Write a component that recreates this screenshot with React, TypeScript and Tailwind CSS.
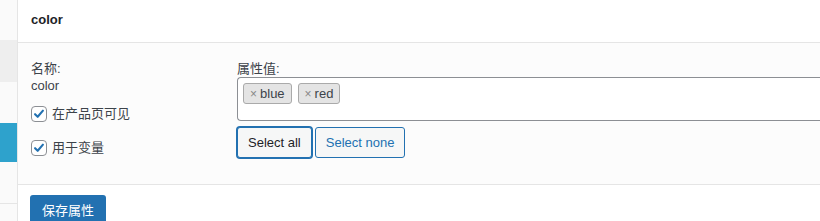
import React from 'react';

const font = { fontFamily: '"Liberation Sans", "Noto Sans CJK SC", sans-serif' };

function Check({ label }: { label: string }) {
  return (
    <label className="flex h-[19px] items-center gap-[5px] text-[13px] text-[#3c434a]">
      <span className="flex h-4 w-4 items-center justify-center rounded-[4px] border border-[#8c8f94] bg-white">
        <svg viewBox="0 0 16 16" className="h-[14px] w-[14px]">
          <path d="M3.5 8.2 L6.5 11.2 L12.5 4.2" fill="none" stroke="#2271b1" strokeWidth="2.4" strokeLinecap="round" strokeLinejoin="round" />
        </svg>
      </span>
      {label}
    </label>
  );
}

function Tag({ text }: { text: string }) {
  return (
    <span className="flex h-[21px] items-center rounded-[3px] border border-[#aaaaaa] bg-[#e4e4e4] px-[6px] text-[13px] text-[#3c434a]">
      <span className="mr-[3px] text-[12px] text-[#888]">×</span>
      {text}
    </span>
  );
}

export default function App() {
  return (
    <div className="flex h-[221px] w-[820px] overflow-hidden bg-white" style={font}>
      <div className="flex w-[18px] shrink-0 flex-col border-r border-[#e5e5e5]">
        <div className="h-[40px] shrink-0 bg-[#fafafa]" />
        <div className="h-[42px] shrink-0 bg-[#eeeeee]" />
        <div className="h-[41px] shrink-0 bg-[#fafafa]" />
        <div className="h-[39px] shrink-0 bg-[#2ea2cc]" />
        <div className="h-[42px] shrink-0 border-b border-[#e5e5e5] bg-[#fafafa]" />
        <div className="flex-1 bg-[#fafafa]" />
      </div>
      <div className="flex flex-1 flex-col">
        <div className="flex h-[43px] shrink-0 items-center border-b border-[#e5e5e5] bg-white pb-[2px] pl-[13px]">
          <span className="text-[13px] font-bold text-[#1d2327]">color</span>
        </div>
        <div className="flex h-[142px] shrink-0 border-b border-[#e5e5e5] bg-[#fcfcfc] pl-[13px] pt-[17px]">
          <div className="w-[206px] shrink-0">
            <div className="text-[13px] leading-[17px] text-[#3c434a]">名称:</div>
            <div className="text-[13px] leading-[17px] text-[#3c434a]">color</div>
            <div className="mt-[10px] flex flex-col gap-[15px]">
              <Check label="在产品页可见" />
              <Check label="用于变量" />
            </div>
          </div>
          <div className="flex-1">
            <div className="text-[13px] leading-[17px] text-[#3c434a]">属性值:</div>
            <div className="-mr-[4px] h-[44px] rounded-l-[4px] border border-r-0 border-[#8c8f94] bg-white px-[5px] pt-[5px]">
              <div className="flex gap-[6px]">
                <Tag text="blue" />
                <Tag text="red" />
              </div>
            </div>
            <div className="mt-[6px] flex gap-[3px]">
              <button className="h-[31px] rounded-[3px] border border-[#2271b1] bg-[#f6f7f7] px-[10px] text-[13px] text-[#1d2327] shadow-[0_0_0_1px_#2271b1]">
                Select all
              </button>
              <button className="h-[31px] rounded-[3px] border border-[#2271b1] bg-[#f6f7f7] px-[10px] text-[13px] text-[#2271b1]">
                Select none
              </button>
            </div>
          </div>
        </div>
        <div className="flex-1 bg-white pl-[12px] pt-[10px]">
          <button className="h-[32px] rounded-[3px] bg-[#2271b1] px-[12px] text-[13px] text-white">保存属性</button>
        </div>
      </div>
    </div>
  );
}
